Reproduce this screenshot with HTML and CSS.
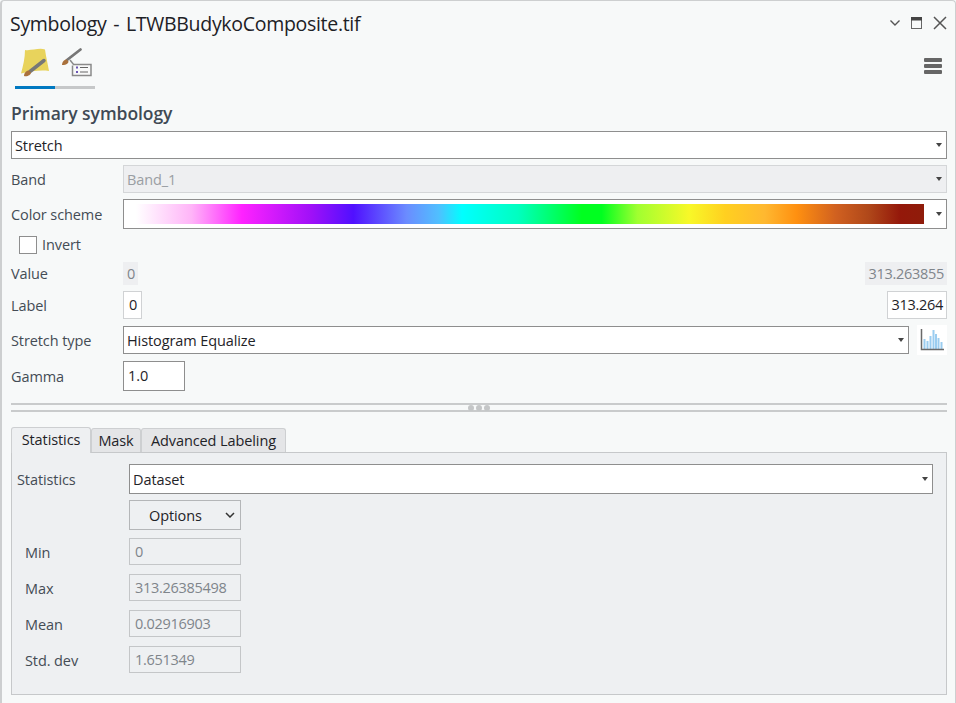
FILE: index.html
```html
<!DOCTYPE html>
<html lang="en">
<head>
    <meta charset="UTF-8">
    <meta name="viewport" content="width=device-width, initial-scale=1.0">
    <title>Symbology</title>
    <link rel="stylesheet" href="styles.css">
</head>
<body>
    <div class="pane">
        <div class="titlebar">
            <h1>Symbology - LTWBBudykoComposite.tif</h1>
            <div class="window-btns">
                <svg width="12" height="8" viewBox="0 0 12 8"><path d="M1.500 1.500 6 6l4.500-4.500" fill="none" stroke="#555" stroke-width="1.400"/></svg>
                <svg width="12" height="13" viewBox="0 0 12 13"><rect x=".5" y=".5" width="10" height="11" fill="none" stroke="#666"/><rect x="0" y="0" width="11" height="3.500" fill="#444"/></svg>
                <svg width="14" height="14" viewBox="0 0 14 14"><path d="M1 1l12 12M13 1 1 13" fill="none" stroke="#555" stroke-width="1.500"/></svg>
            </div>
        </div>

        <div class="toolbar">
            <div class="mode-tabs">
                <div class="mode-tab active">
                    <svg width="40" height="36" viewBox="0 0 40 36">
                        <path d="M10 4C16 5 24 1.500 30 3.500 31 11 33 19 34 25 26 24 16 25 6 27.500 8 20 10 12 10 4Z" fill="#e8d35c"/>
                        <path d="M15 25.500 29 14.500" stroke="#777" stroke-width="3.500" stroke-linecap="round"/>
                        <path d="M9 30c0-3 2-5.500 5-5.500l2 2c0 2.500-4 4.500-7 3.500Z" fill="#a9713c"/>
                    </svg>
                </div>
                <div class="mode-tab">
                    <svg width="40" height="36" viewBox="0 0 40 36">
                        <path d="M12 14 25.500 3.500" stroke="#777" stroke-width="2.800" stroke-linecap="round"/>
                        <path d="M7 19c0-3 2-5.500 4.500-5.500l2 2c0 2-3.500 4-6.500 3.500Z" fill="#a9713c"/>
                        <path d="M19 18.500h17v11H17.500v-10" fill="#f8f9f9" stroke="#8a8a8a" stroke-width="1.500"/>
                        <path d="M15 14l4 5" stroke="#8a8a8a" stroke-width="1.500"/>
                        <path d="M21 21.500h2M21 26h2" stroke="#6a55b5" stroke-width="2"/>
                        <path d="M25 21.500h8M25 26h8" stroke="#666" stroke-width="1.200"/>
                    </svg>
                </div>
            </div>
            <div class="menu-btn"><span></span><span></span><span></span></div>
        </div>

        <h2>Primary symbology</h2>
        <div class="combo stretch-combo">Stretch</div>

        <div class="form-row band-row">
            <label>Band</label>
            <div class="combo disabled">Band_1</div>
        </div>
        <div class="form-row scheme-row">
            <label>Color scheme</label>
            <div class="combo scheme"><div class="ramp"></div></div>
        </div>
        <div class="invert-row"><span class="checkbox"></span><span class="invert-text">Invert</span></div>
        <div class="form-row value-row">
            <label>Value</label>
            <div class="ends">
                <span class="readout">0</span>
                <span class="readout">313.263855</span>
            </div>
        </div>
        <div class="form-row label-row">
            <label>Label</label>
            <div class="ends">
                <span class="edit">0</span>
                <span class="edit">313.264</span>
            </div>
        </div>
        <div class="form-row stretch-row">
            <label>Stretch type</label>
            <div class="combo">Histogram Equalize</div>
            <div class="hist-btn">
                <svg width="24" height="24" viewBox="0 0 24 24">
                    <path d="M4.500 11v10M7.500 13v8M10.500 8v13M13.500 2v19M16 6v15M18.500 10v11M21.500 14v7" stroke="#9bcdf0" stroke-width="2"/>
                    <path d="M1.500 1v20.500H24" fill="none" stroke="#6a6a6a" stroke-width="1.500"/>
                </svg>
            </div>
        </div>
        <div class="form-row gamma-row">
            <label>Gamma</label>
            <div class="gamma">1.0</div>
        </div>

        <div class="splitter"><i></i><i></i><i></i></div>

        <div class="tabs">
            <div class="tab active">Statistics</div>
            <div class="tab tab-mask">Mask</div>
            <div class="tab tab-labeling">Advanced Labeling</div>
        </div>
        <div class="tab-body">
            <div class="stat-row">
                <label class="stat-main">Statistics</label>
                <div class="combo dataset">Dataset</div>
            </div>
            <div class="options">Options
                <svg width="10" height="6" viewBox="0 0 10 6"><path d="M1 1l4 4 4-4" fill="none" stroke="#333" stroke-width="1.500"/></svg>
            </div>
            <div class="stat-list">
                <div class="stat-row"><label>Min</label><div class="stat-box">0</div></div>
                <div class="stat-row"><label>Max</label><div class="stat-box">313.26385498</div></div>
                <div class="stat-row"><label>Mean</label><div class="stat-box">0.02916903</div></div>
                <div class="stat-row"><label>Std. dev</label><div class="stat-box">1.651349</div></div>
            </div>
        </div>
    </div>
</body>
</html>
```

FILE: styles.css
```css
* {
    box-sizing: border-box;
}
body {
    margin: 0;
    font-family: "Open Sans", "Noto Sans", sans-serif;
    font-size: 14.500px;
    letter-spacing: -0.1px;
    color: #1f2328;
    background-color: #f7f9f9;
}
.pane {
    width: 956px;
    height: 703px;
    padding: 0 8px 0 9px;
    border: 2px solid #cdcfd0;
    border-width: 1px 1px 0 2px;
    border-radius: 4px 4px 0 0;
    background-color: #f7f9f9;
    overflow: hidden;
}
.titlebar {
    display: flex;
    justify-content: space-between;
    align-items: center;
    height: 44px;
    margin-left: -1px;
}
h1 {
    margin: 0;
    font-size: 19.500px;
    font-weight: 400;
    letter-spacing: -0.3px;
    word-spacing: 2px;
    color: #1d2126;
}
.window-btns {
    display: flex;
    align-items: center;
    gap: 10px;
}
.toolbar {
    display: flex;
    justify-content: space-between;
    height: 44px;
}
.mode-tabs {
    display: flex;
    margin-left: 4px;
}
.mode-tab {
    width: 40px;
    height: 44px;
    border-bottom: 3px solid #c6c8c9;
}
.mode-tab.active {
    border-bottom-color: #0079c1;
}
.mode-tab svg {
    display: block;
    margin-top: 1px;
}
.menu-btn {
    display: flex;
    flex-direction: column;
    gap: 2px;
    width: 18px;
    margin: 13px 5px 0 0;
}
.menu-btn span {
    height: 4px;
    border-radius: 1px;
    background-color: #666;
}
h2 {
    margin: 0;
    padding-top: 12px;
    height: 42px;
    font-size: 17.500px;
    font-weight: 600;
    letter-spacing: -0.05px;
    line-height: 24px;
    color: #3f4a55;
}
label {
    color: #444c55;
}
.combo {
    position: relative;
    display: flex;
    align-items: center;
    flex: 1;
    height: 28px;
    padding: 0 20px 0 3px;
    border: 1px solid #8e8e8e;
    background-color: #fff;
}
.combo::after {
    content: "";
    position: absolute;
    right: 4px;
    top: 50%;
    margin-top: -2px;
    border: 3.500px solid transparent;
    border-top: 4px solid #444;
    border-bottom: 0;
}
.combo.disabled {
    border-color: #d4d6d8;
    background-color: #eeeff1;
    color: #9a9ea3;
}
.form-row {
    display: flex;
    align-items: center;
    margin-top: 6px;
}
.form-row label {
    flex: 0 0 112px;
}
.scheme {
    height: 30px;
    padding: 4px 22px 4px 4px;
}
.ramp {
    width: 796px;
    height: 20px;
    background: linear-gradient(to right, #fff 0%, #fff 1%, #ffb4f8 8%, #ff22ff 14.300%, #a010f8 23%, #5010ff 28.300%, #6b8cff 35%, #50bfff 39%, #00ffff 42%, #00ffc0 49%, #00ff20 57%, #00ff20 59.500%, #a0ff30 64%, #f8f828 70.500%, #ffd020 75%, #ffb830 80%, #ff9010 84%, #d06020 89%, #b0481a 93%, #94180a 97%, #8f1c0a 100%);
}
.invert-row {
    display: flex;
    align-items: center;
    gap: 5px;
    height: 18px;
    margin: 7px 0 0 8px;
    color: #444c55;
}
.invert-text {
    margin-top: -2px;
}
.checkbox {
    width: 18px;
    height: 18px;
    border: 1px solid #8e8e8e;
    background-color: #fff;
}
.value-row {
    margin-top: 8px;
}
.ends {
    display: flex;
    flex: 1;
    justify-content: space-between;
    align-items: center;
}
.readout {
    display: block;
    height: 23px;
    padding: 0 3px 0 4px;
    letter-spacing: -0.3px;
    line-height: 23px;
    background-color: #eeeff1;
    color: #7f858b;
}
.edit {
    display: block;
    height: 28px;
    padding: 0 3px 0 4px;
    letter-spacing: -0.3px;
    line-height: 26px;
    border: 1px solid #d0d2d4;
    background-color: #fff;
}
.edit:first-child {
    padding: 0 4px 0 5px;
}
.hist-btn {
    width: 30px;
    height: 30px;
    margin-left: 8px;
    background-color: #fff;
}
.hist-btn svg {
    display: block;
    margin: 3px 0 0 3px;
}
.gamma {
    width: 62px;
    height: 30px;
    padding-left: 4px;
    line-height: 28px;
    border: 1px solid #8e8e8e;
    background-color: #fff;
}
.splitter {
    display: flex;
    justify-content: center;
    align-items: center;
    gap: 2px;
    height: 9px;
    margin-top: 12px;
    border-top: 2px solid #c9cbcc;
    border-bottom: 2px solid #c9cbcc;
}
.splitter i {
    width: 6px;
    height: 6px;
    border-radius: 50%;
    background-color: #c4c6c7;
}
.tabs {
    display: flex;
    align-items: flex-end;
    height: 25px;
    margin-top: 15px;
    position: relative;
    z-index: 1;
}
.tab {
    height: 24px;
    line-height: 24px;
    text-align: center;
    border: 1px solid #cdcfd1;
    border-bottom: 0;
    border-radius: 3px 3px 0 0;
    background-color: #e4e5e7;
}
.tab.active {
    width: 80px;
    height: 26px;
    margin-bottom: -1px;
    background-color: #eef0f2;
}
.tab-mask {
    width: 50px;
}
.tab-labeling {
    width: 145px;
}
.tab-body {
    height: 243px;
    padding: 11px 13px 0 5px;
    border: 1px solid #c6c8ca;
    background-color: #eef0f2;
}
.stat-row {
    display: flex;
    align-items: center;
}
.stat-row label {
    flex: 0 0 112px;
    padding: 1px 0 0 8px;
}
.stat-row .stat-main {
    padding: 0;
}
.dataset {
    height: 30px;
}
.options {
    display: flex;
    justify-content: space-between;
    align-items: center;
    width: 112px;
    height: 30px;
    margin: 6px 0 0 112px;
    padding: 0 5px 0 19px;
    border: 1px solid #b4b6b8;
    background-color: #eef0f2;
}
.stat-list {
    display: flex;
    flex-direction: column;
    gap: 9px;
    margin-top: 8px;
}
.stat-box {
    width: 112px;
    height: 27px;
    padding-left: 5px;
    letter-spacing: -0.3px;
    line-height: 25px;
    border: 1px solid #c4c6c8;
    color: #7f858b;
}
```
